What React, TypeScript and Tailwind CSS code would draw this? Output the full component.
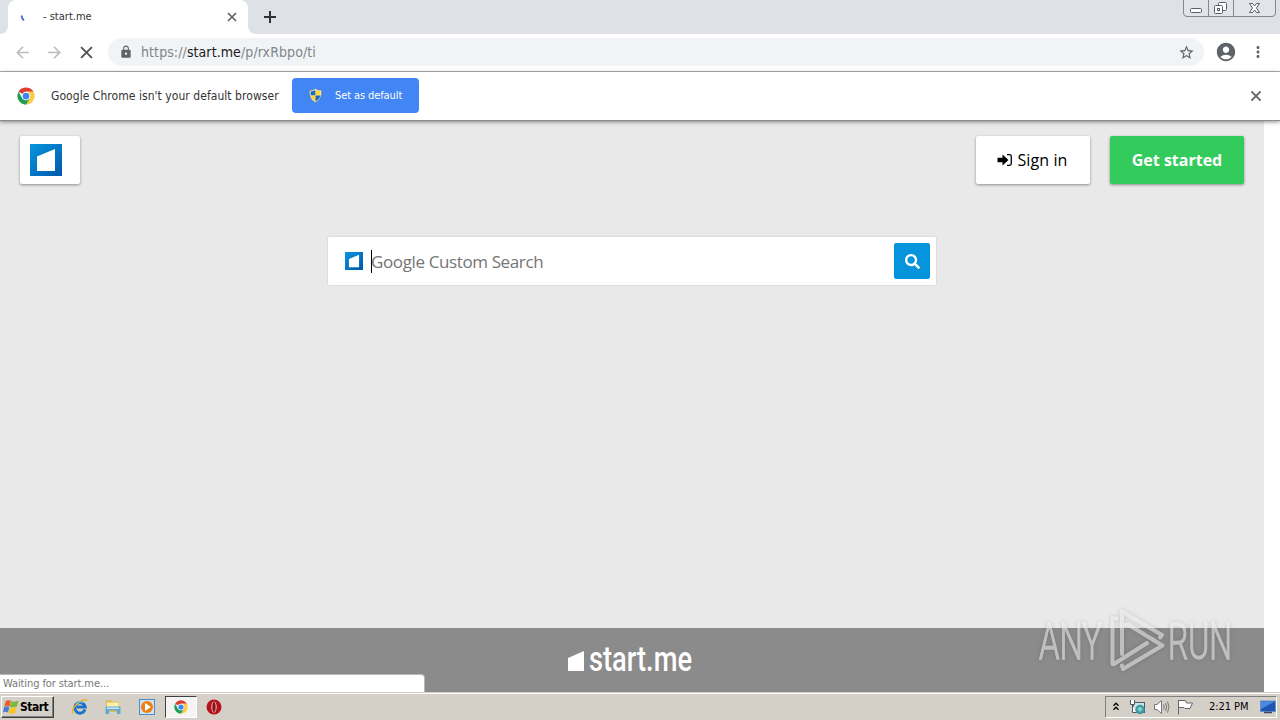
import React from 'react'
import { FaSearch } from 'react-icons/fa'
import { MdLock, MdStarBorder, MdAccountCircle, MdMoreVert, MdArrowBack, MdArrowForward } from 'react-icons/md'

const ChromeLogo = ({ className }: { className?: string }) => (
  <svg viewBox="0 0 48 48" className={className}>
    <circle cx="24" cy="24" r="23" fill="#fff" />
    <path d="M24 24 4.1 12.5A23 23 0 0 1 43.9 12.5L24 12.5Z" fill="#db3d2f" />
    <path d="M43.9 12.5A23 23 0 0 1 24 47L34 29.8 24 12.5Z" fill="#fccb3e" />
    <path d="M24 47A23 23 0 0 1 4.1 12.5L14 29.8 24 35.5 34 29.8Z" fill="#1f9d57" />
    <circle cx="24" cy="24" r="11.5" fill="#fff" />
    <circle cx="24" cy="24" r="9" fill="#4285f4" />
  </svg>
)

const StartMeLogo = ({ className }: { className?: string }) => (
  <svg viewBox="0 0 32 32" className={className}>
    <defs>
      <linearGradient id="smBlue" x1="0" y1="0" x2="1" y2="1">
        <stop offset="0" stopColor="#0796dd" />
        <stop offset="1" stopColor="#0058ac" />
      </linearGradient>
    </defs>
    <rect width="32" height="32" fill="url(#smBlue)" />
    <path d="M7 12.5 25 5V27H7Z" fill="#fff" />
  </svg>
)

const Cross = ({ className }: { className?: string }) => (
  <svg viewBox="0 0 14 14" className={className} fill="none" stroke="currentColor">
    <path d="M3 3 11 11M11 3 3 11" />
  </svg>
)

const Shield = () => (
  <svg viewBox="0 0 16 16" className="h-[15px] w-[15px]">
    <path d="M8 .5C6 2 4 2.5 1.5 2.5 1.2 8.5 3 13 8 15.5 13 13 14.8 8.5 14.5 2.5 12 2.5 10 2 8 .5Z" fill="#e8eef5" stroke="#6f7a80" strokeWidth=".6" />
    <path d="M8 2C6.3 3 4.5 3.5 2.8 3.6L2.9 8H8Z" fill="#1c68bd" />
    <path d="M8 2C9.7 3 11.5 3.5 13.2 3.6L13.1 8H8Z" fill="#fbd72f" />
    <path d="M2.9 8C3.5 11 5 13 8 14.3V8Z" fill="#fbd72f" />
    <path d="M13.1 8C12.5 11 11 13 8 14.3V8Z" fill="#1c68bd" />
  </svg>
)

const WindowButtons = () => (
  <svg viewBox="0 0 94 18" className="h-[18px] w-[94px]" fill="none">
    <path d="M.5 0V13Q.5 16.5 4 16.5H89Q92.5 16.5 92.5 13V0" fill="#e1e4ea" stroke="#84888f" />
    <path d="M25.5 0V16M50.5 0V16" stroke="#84888f" />
    <rect x="7.5" y="8.5" width="11" height="4" rx="1" fill="#fff" stroke="#5c6067" />
    <rect x="35.5" y="2.5" width="8" height="8" rx="1" fill="#fff" stroke="#5c6067" />
    <rect x="31.5" y="5.5" width="8" height="8" rx="1" fill="#fff" stroke="#5c6067" />
    <rect x="34.5" y="8.5" width="2" height="2" stroke="#5c6067" />
    <path d="M66.5 3.5H69.5L71.5 6 73.5 3.5H76.5L73.5 8 76.5 12.5H73.5L71.5 10 69.5 12.5H66.5L69.5 8Z" fill="#fff" stroke="#5c6067" />
  </svg>
)

const TabStrip = () => (
  <div className="flex h-[34px] shrink-0 items-start bg-[#dee1e6]">
    <div className="flex h-full w-2 items-end bg-white">
      <div className="h-full w-2 rounded-br-lg bg-[#dee1e6]" />
    </div>
    <div className="flex h-full w-[240px] items-center rounded-t-lg bg-white pl-3 pr-[9px]">
      <svg viewBox="0 0 8 10" className="mt-1 h-[10px] w-2" fill="none">
        <path d="M1.5 1.5C1.8 3.5 2.5 5 4 6.5" stroke="#3f5fd0" strokeWidth="1.7" />
      </svg>
      <span className="ml-[15px] mt-px flex-1 text-[11px] text-[#303236]">- start.me</span>
      <Cross className="h-[14px] w-[14px] stroke-[1.7] text-[#5f6368]" />
    </div>
    <div className="flex h-full w-2 items-end bg-white">
      <div className="h-full w-2 rounded-bl-lg bg-[#dee1e6]" />
    </div>
    <svg viewBox="0 0 18 18" className="ml-[5px] mt-2 h-[18px] w-[18px]" fill="none" stroke="#303236" strokeWidth="2">
      <path d="M9 3V15M3 9H15" />
    </svg>
    <div className="ml-auto mr-[3px]">
      <WindowButtons />
    </div>
  </div>
)

const Toolbar = () => (
  <div className="flex h-[38px] shrink-0 items-center border-b border-[#b0b3b5] bg-white pb-px pl-[13px] pr-[13px]">
    <MdArrowBack className="h-[19px] w-[19px] text-[#babcbe]" />
    <MdArrowForward className="ml-[13px] h-[19px] w-[19px] text-[#babcbe]" />
    <Cross className="ml-[13px] h-[19px] w-[19px] stroke-[1.4] text-[#505357]" />
    <div className="ml-3 flex h-7 w-[1096px] items-center rounded-full bg-[#f1f3f4] pl-[11px] pr-[9px]">
      <MdLock className="h-[14px] w-[14px] text-[#5f6368]" />
      <p className="ml-2 flex-1 text-[14px] tracking-[0.09px] text-[#80858a]">
        https://<span className="text-[#202124]">start.me</span>/p/rxRbpo/ti
      </p>
      <MdStarBorder className="h-[17px] w-[17px] text-[#5f6368]" />
    </div>
    <MdAccountCircle className="ml-[11px] h-[22px] w-[22px] text-[#5f6368]" />
    <MdMoreVert className="ml-auto h-[18px] w-[18px] text-[#5f6368]" />
  </div>
)

const InfoBar = () => (
  <div className="z-10 flex h-[49px] shrink-0 items-center border-b border-[#8b8b8b] bg-white pb-px pl-[17px] pr-4 shadow-[0_1px_4px_rgba(0,0,0,0.45)]">
    <ChromeLogo className="h-[18px] w-[18px]" />
    <span className="ml-4 w-[241px] whitespace-nowrap text-[12px] tracking-[0.05px] text-[#333]">Google Chrome isn't your default browser</span>
    <button className="flex h-[35px] w-[127px] items-center rounded bg-[#4285f4] pl-4">
      <Shield />
      <span className="ml-3 mt-px whitespace-nowrap text-[11px] tracking-[-0.1px] text-white">Set as default</span>
    </button>
    <Cross className="ml-auto mt-px h-4 w-4 stroke-[1.6] text-[#5f6368]" />
  </div>
)

// translucent sandbox watermark in the bottom right corner
const Watermark = () => (
  <svg viewBox="0 0 210 70" className="absolute left-[1030px] top-[485px] h-[70px] w-[210px] overflow-visible drop-shadow-[0_0_2px_rgba(0,0,0,0.3)]" fill="none">
    <g opacity="0.5">
      <g fill="#fff" stroke="#fff" strokeWidth="1.3" fontFamily="Roboto, sans-serif" fontWeight="300" fontSize="50">
        <text x="9" y="53" textLength="63" lengthAdjust="spacingAndGlyphs">ANY</text>
        <text x="138" y="53" textLength="64" lengthAdjust="spacingAndGlyphs">RUN</text>
      </g>
      <path
        d="M86.5 12.5H82.5V58H84L117 37M92 48V5.5L132 29 130 31.5M92 19 98 18.5 132.5 39.5 93 63 92 59.5"
        stroke="#fff"
        strokeWidth="4"
        strokeLinejoin="round"
        strokeLinecap="round"
      />
    </g>
  </svg>
)

const Page = () => (
  <div className="relative flex min-h-0 flex-1 bg-white">
    <div className="flex w-[1264px] flex-col bg-[#e9e9e9] font-['Open_Sans','Noto_Sans',sans-serif]">
      <div className="flex justify-between px-5 pt-[15px]">
        <div className="flex h-12 w-[60px] items-center rounded-xs bg-white pl-[10px] shadow-[0_1px_3px_rgba(0,0,0,0.4)]">
          <StartMeLogo className="h-8 w-8" />
        </div>
        <div className="flex gap-5">
          <button className="flex h-12 w-[114px] items-center justify-center gap-1 rounded-xs bg-white pr-px text-[16px] tracking-[0.1px] text-black shadow-[0_1px_3px_rgba(0,0,0,0.4)]">
            <svg viewBox="0 0 16 14" className="h-[14px] w-4" fill="none">
              <path d="M.5 4.8H5.5V1.5L11.5 7 5.5 12.5V9.2H.5Z" fill="#000" />
              <path d="M10 1.7H12.5Q14.3 1.7 14.3 3.5V10.5Q14.3 12.3 12.5 12.3H10" stroke="#000" strokeWidth="1.3" />
            </svg>
            Sign in
          </button>
          <button className="h-12 w-[134px] rounded-xs bg-[#33cb5c] text-[16px] font-bold text-white shadow-[0_1px_3px_rgba(0,0,0,0.4)]">Get started</button>
        </div>
      </div>

      <div className="mx-auto mt-[53px] flex h-12 w-[608px] items-center bg-white pl-[17px] pr-[6px] shadow-[0_0_2px_rgba(0,0,0,0.15)]">
        <StartMeLogo className="h-[18px] w-[18px]" />
        <div className="ml-2 h-[23px] w-px bg-black" />
        <span className="-ml-px mt-px flex-1 text-[17px] tracking-[-0.38px] text-[#757575]">Google Custom Search</span>
        <button className="flex h-9 w-9 items-center justify-center rounded-xs bg-[#0694dd] text-white">
          <FaSearch className="h-[15px] w-[15px]" />
        </button>
      </div>

      <footer className="mt-auto flex h-16 justify-center bg-[#8b8b8b]">
        <svg viewBox="0 0 126 40" className="-ml-1 mt-3 h-10 w-[126px] overflow-visible" fill="#fff">
          <path d="M1 18 17 11V31H1Z" />
          <text x="22" y="31" fontFamily="Roboto, sans-serif" fontWeight="500" fontSize="35" textLength="103" lengthAdjust="spacingAndGlyphs">start.me</text>
        </svg>
      </footer>
    </div>
    <Watermark />
    <div className="absolute bottom-0 left-0 flex h-[18px] w-[425px] items-center rounded-tr border-r border-t border-[#b8b8b8] bg-white pl-[3px] pt-px text-[11px] tracking-[-0.1px] text-[#777]">
      Waiting for start.me...
    </div>
  </div>
)

const Taskbar = () => (
  <div className="flex h-7 shrink-0 items-center border-t border-[#d4d0c8] bg-[#d4d0c8] pr-[3px] pt-px shadow-[inset_0_1px_0_#fff]">
    <button className="ml-px flex h-[22px] w-[53px] items-center border border-b-[#404040] border-l-white border-r-[#404040] border-t-white pl-px text-[12px] font-bold tracking-[-0.5px] text-black shadow-[inset_-1px_-1px_0_#808080]">
      <svg viewBox="0 0 16 16" className="mr-px h-4 w-4 shrink-0">
        <path d="M2.8 2Q5 .5 7.8 1.8L6.5 7.5Q4 6.2 1.3 7.5Z" fill="#ee5a24" />
        <path d="M8.3 2.1Q11 3.5 15.5 1.6L14 7.5Q10.5 9 7 7.8Z" fill="#7cb83c" />
        <path d="M1.2 8Q4 6.7 6.3 8L5 13.5Q2.5 12.3 0 13.3Z" fill="#3f7fd6" />
        <path d="M6.8 8.3Q10 9.7 13.8 8.1L12.3 13.8Q9 15.8 5.4 14.3Z" fill="#f8c52a" />
      </svg>
      Start
    </button>
    <svg viewBox="0 0 18 18" className="ml-[17px] h-[18px] w-[18px]" fill="none">
      <path d="M14 11.5A5.3 5.3 0 1 1 14.2 9H5.5" stroke="#1d72c8" strokeWidth="3" />
      <path d="M2 15.5C-1 11 11-1 16.5 2.5" stroke="#e7b928" strokeWidth="1.5" />
      <path d="M5 5.5A5 5 0 0 1 12 5" stroke="#6cc4f5" />
    </svg>
    <svg viewBox="0 0 18 18" className="ml-[15px] h-[18px] w-[18px]">
      <path d="M2 2H7L8 3.5H15V14H2Z" fill="#dfbd52" />
      <path d="M3 4.5H14.5V10H3Z" fill="#fdf1aa" />
      <path d="M1.5 8.5H16.5V16H13V12.5H5V16H1.5Z" fill="#62a9d6" />
      <path d="M3 9.5H15V11H3Z" fill="#c9e8f8" />
    </svg>
    <svg viewBox="0 0 16 16" className="ml-[17px] h-4 w-4">
      <rect x=".5" y=".5" width="15" height="15" fill="#cfe3f6" stroke="#4b8cc9" />
      <circle cx="8" cy="8" r="6" fill="#ef7f12" />
      <path d="M6 4 12 8 6 12Z" fill="#fff" />
    </svg>
    <div className="ml-[10px] flex h-[22px] w-8 items-center justify-center border border-b-white border-l-[#404040] border-r-white border-t-[#404040] bg-[#f5f4f2]">
      <ChromeLogo className="h-[14px] w-[14px]" />
    </div>
    <svg viewBox="0 0 16 16" className="ml-[9px] h-4 w-4">
      <circle cx="8" cy="8" r="7.5" fill="#b5121b" />
      <ellipse cx="8" cy="8" rx="2.6" ry="5.5" fill="#f0e6e4" />
      <ellipse cx="8" cy="8" rx="1.7" ry="5" fill="#8e0f17" />
    </svg>

    <div className="ml-auto flex h-[22px] w-[172px] items-center border border-b-white border-l-[#808080] border-r-white border-t-[#808080] pl-[7px]">
      <svg viewBox="0 0 6 9" className="mb-[2px] h-[9px] w-[6px]" fill="none" stroke="#000" strokeWidth="1.3">
        <path d="M.5 3.7 3 1.2 5.5 3.7M.5 7.7 3 5.2 5.5 7.7" />
      </svg>
      <svg viewBox="0 0 17 16" className="ml-[10px] h-4 w-[17px]">
        <rect x="4.5" y="3.5" width="11" height="10" fill="#cde5e9" stroke="#4c5960" />
        <path d="M1.5 1V5.5H5.5V1M3.5 5.5V13.5H7" fill="#fff" stroke="#4c5960" />
        <circle cx="11" cy="10.5" r="4.7" fill="#3b9aa5" />
        <path d="M8 10 11 7.5 14 10 11 13Z" fill="#7fd0c4" />
      </svg>
      <svg viewBox="0 0 17 16" className="ml-[7px] h-4 w-[17px]" fill="none" stroke="#777">
        <path d="M1.5 5.5H4L8.5 1.5V14.5L4 10.5H1.5Z" fill="#fff" />
        <path d="M10.5 5.5Q12 8 10.5 10.5M12.5 4Q14.8 8 12.5 12M14.5 2.5Q17.5 8 14.5 13.5" />
      </svg>
      <svg viewBox="0 0 17 16" className="ml-[7px] h-4 w-[17px]" fill="#fff" stroke="#666">
        <path d="M1.5 1V15.5M1.5 1.5H8.5L9.5 4H15.5L13 9.5H8L7 8.5H1.5" />
      </svg>
      <span className="ml-[15px] w-[51px] whitespace-nowrap pt-px text-[11px] tracking-[-0.05px] text-black">2:21 PM</span>
      <svg viewBox="0 0 16 14" className="h-[14px] w-4">
        <rect x=".5" y="1" width="15" height="10.5" fill="#1e55b5" stroke="#6b8fc9" />
        <path d="M1 1.5H15L1 9Z" fill="#4b8ae0" />
        <path d="M4 12.5H12" stroke="#3d4a5c" strokeWidth="1.5" />
      </svg>
    </div>
  </div>
)

const App = () => {
  return (
    <div className="flex h-[720px] w-[1280px] flex-col overflow-hidden font-['DejaVu_Sans_Condensed','DejaVu_Sans',sans-serif]">
      <TabStrip />
      <Toolbar />
      <InfoBar />
      <Page />
      <Taskbar />
    </div>
  )
}

export default App
